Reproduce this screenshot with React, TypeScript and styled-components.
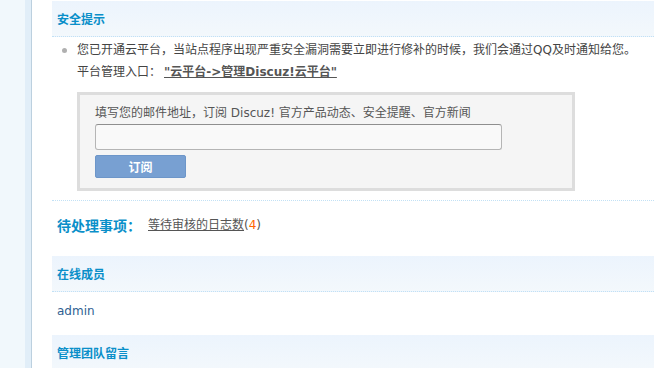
import React from "react";
import styled, { createGlobalStyle } from "styled-components";

const Global = createGlobalStyle`
  html, body { margin: 0; padding: 0; background: #fff; }
  body {
    font: 12px/1.5 "DejaVu Sans", "Noto Sans CJK SC", sans-serif;
    color: #444;
    overflow: hidden;
  }
`;

const Page = styled.div`
  display: flex;
  width: 654px;
  height: 368px;
  overflow: hidden;
`;

const Side = styled.div`
  flex: 0 0 25px;
  background: #f1f8fc;
`;

const SideStrip = styled.div`
  flex: 0 0 6px;
  background: #e1eef8;
  border-right: 1px solid #bcd0df;
`;

const Main = styled.div`
  flex: 1;
  padding-left: 20px;
  min-width: 0;
`;

const Head = styled.div<{ $first?: boolean }>`
  height: 35px;
  margin-top: ${(p) => (p.$first ? "1px" : "0")};
  background: linear-gradient(#ecf4fd, #f3f8fc);
  border-bottom: 1px dotted #c2e1f5;
  padding-left: 5px;
  display: flex;
  align-items: center;
  font-family: "Noto Sans CJK SC", sans-serif;
  font-weight: bold;
  font-size: 12px;
  color: #0a8fc9;
`;

const Notice = styled.div`
  padding-top: 2px;
  padding-bottom: 9px;
  border-bottom: 1px dotted #c2e1f5;
`;

const Item = styled.div`
  display: flex;
  align-items: flex-start;
`;

const Dot = styled.span`
  flex: 0 0 5px;
  height: 5px;
  border-radius: 50%;
  background: #b0b0b0;
  margin: 9px 10px 0 10px;
`;

const Lines = styled.div`
  line-height: 22px;
  font-family: "DejaVu Sans", "Noto Sans CJK SC", sans-serif;
  color: #444;
  white-space: nowrap;
`;

const StrongLink = styled.a`
  color: #555;
  font-weight: bold;
  text-decoration: underline;
  margin-left: 3px;
`;

const SubBox = styled.div`
  margin: 9px 0 0 25px;
  border: 3px solid #dddddd;
  background: #f5f5f5;
  padding: 8px 15px 10px 15px;
  box-sizing: border-box;
  width: 498px;
`;

const SubLabel = styled.div`
  line-height: 20px;
  color: #555;
  white-space: nowrap;
`;

const EmailInput = styled.input`
  display: block;
  margin-top: 1px;
  width: 407px;
  height: 26px;
  box-sizing: border-box;
  border: 1px solid #b5b5b5;
  border-top-color: #8f8f8f;
  border-radius: 3px;
  background: #f9f9f9;
  outline: none;
`;

const SubButton = styled.button`
  display: block;
  margin-top: 5px;
  width: 91px;
  height: 23px;
  border: 1px solid #6d96c9;
  border-radius: 2px;
  background: #78a0d2;
  color: #fff;
  font-family: "Noto Sans CJK SC", sans-serif;
  font-weight: bold;
  font-size: 12px;
  padding: 0;
  line-height: 21px;
`;

const Pending = styled.div`
  display: flex;
  align-items: center;
  padding: 8px 0 15px 5px;
  height: 32px;
`;

const PendTitle = styled.span`
  font-family: "Noto Sans CJK SC", sans-serif;
  font-weight: bold;
  font-size: 14px;
  color: #0a8fc9;
  margin-right: 7px;
`;

const PendLink = styled.a`
  color: #555;
  text-decoration: underline;
`;

const Paren = styled.span`
  color: #555;
`;

const Count = styled.span`
  color: #ff6600;
`;

const Members = styled.div`
  height: 43px;
  padding-left: 5px;
  display: flex;
  align-items: center;
  box-sizing: border-box;
`;

const Member = styled.a`
  color: #2f5f92;
  font-family: "DejaVu Sans", sans-serif;
  font-size: 12px;
  text-decoration: none;
  margin-top: -5px;
`;

export default function App() {
  return (
    <>
      <Global />
      <Page>
        <Side />
        <SideStrip />
        <Main>
          <Head $first>安全提示</Head>
          <Notice>
            <Item>
              <Dot />
              <Lines>
                <div>您已开通云平台，当站点程序出现严重安全漏洞需要立即进行修补的时候，我们会通过QQ及时通知给您。</div>
                <div>
                  平台管理入口：<StrongLink>"云平台-&gt;管理Discuz!云平台"</StrongLink>
                </div>
              </Lines>
            </Item>
            <SubBox>
              <SubLabel>填写您的邮件地址，订阅 Discuz! 官方产品动态、安全提醒、官方新闻</SubLabel>
              <EmailInput type="text" />
              <SubButton>订阅</SubButton>
            </SubBox>
          </Notice>
          <Pending>
            <PendTitle>待处理事项：</PendTitle>
            <span>
              <PendLink>等待审核的日志数</PendLink>
              <Paren>(</Paren>
              <Count>4</Count>
              <Paren>)</Paren>
            </span>
          </Pending>
          <Head>在线成员</Head>
          <Members>
            <Member>admin</Member>
          </Members>
          <Head>管理团队留言</Head>
        </Main>
      </Page>
    </>
  );
}
